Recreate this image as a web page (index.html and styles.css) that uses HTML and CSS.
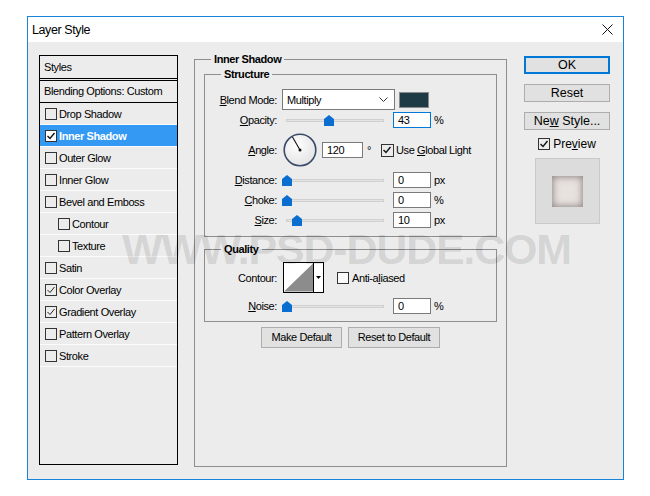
FILE: index.html
```html
<!DOCTYPE html>
<html lang="en">
<head>
    <meta charset="UTF-8">
    <title>Layer Style</title>
    <link rel="stylesheet" href="styles.css">
</head>
<body>
    <div class="dialog">
        <div class="titlebar">
            <span class="title">Layer Style</span>
            <svg class="close" width="11" height="11" viewBox="0 0 11 11"><path d="M0.5 0.5 L10.5 10.5 M10.5 0.5 L0.5 10.5" stroke="#111" stroke-width="1"/></svg>
        </div>

        <div class="content">
            <!-- styles list -->
            <div class="styles-list">
                <div class="list-head">Styles</div>
                <div class="list-blend">Blending Options: Custom</div>
                <div class="list-item"><span class="cb"></span>Drop Shadow</div>
                <div class="list-item selected"><span class="cb"><svg viewBox="0 0 10 10"><polyline points="1.5,5 4,7.5 8.5,2"/></svg></span>Inner Shadow</div>
                <div class="list-item"><span class="cb"></span>Outer Glow</div>
                <div class="list-item"><span class="cb"></span>Inner Glow</div>
                <div class="list-item"><span class="cb"></span>Bevel and Emboss</div>
                <div class="list-item sub"><span class="cb"></span>Contour</div>
                <div class="list-item sub"><span class="cb"></span>Texture</div>
                <div class="list-item"><span class="cb"></span>Satin</div>
                <div class="list-item"><span class="cb thin"><svg viewBox="0 0 10 10"><polyline points="1.5,5 4,7.5 8.5,2"/></svg></span>Color Overlay</div>
                <div class="list-item"><span class="cb thin"><svg viewBox="0 0 10 10"><polyline points="1.5,5 4,7.5 8.5,2"/></svg></span>Gradient Overlay</div>
                <div class="list-item"><span class="cb"></span>Pattern Overlay</div>
                <div class="list-item"><span class="cb"></span>Stroke</div>
            </div>

            <!-- settings -->
            <fieldset class="group outer">
                <legend>Inner Shadow</legend>

                <fieldset class="group structure">
                    <legend>Structure</legend>
                    <div class="row blend-row">
                        <span class="lbl"><u>B</u>lend Mode:</span>
                        <div class="select"><span>Multiply</span><svg width="9" height="5" viewBox="0 0 9 5"><polyline points="0.5,0.5 4.5,4.5 8.5,0.5"/></svg></div>
                        <div class="swatch"></div>
                    </div>
                    <div class="row field-row">
                        <span class="lbl"><u>O</u>pacity:</span>
                        <div class="slider"><div class="track"></div><svg class="thumb" style="left:42px" viewBox="0 0 10 11"><path d="M5 0 L10 4 L10 11 L0 11 L0 4 Z"/></svg></div>
                        <div class="num focused">43</div>
                        <span class="unit">%</span>
                    </div>
                    <div class="row angle-row">
                        <span class="lbl"><u>A</u>ngle:</span>
                        <svg class="dial" width="34" height="34" viewBox="0 0 34 34">
                            <defs>
                                <radialGradient id="dialfill" cx="0.4" cy="0.35" r="0.7">
                                    <stop offset="0" stop-color="#ffffff"/>
                                    <stop offset="1" stop-color="#e2e2e2"/>
                                </radialGradient>
                            </defs>
                            <circle cx="17" cy="17" r="15.8" fill="url(#dialfill)" stroke="#3a4a6a" stroke-width="1.6"/>
                            <line x1="17" y1="17" x2="9.5" y2="4" stroke="#111" stroke-width="1.1"/>
                            <circle cx="17" cy="17" r="1.5" fill="#111"/>
                        </svg>
                        <div class="num angle-num">120</div>
                        <span class="deg">°</span>
                        <span class="cb big"><svg viewBox="0 0 10 10"><polyline points="1.5,5 4,7.5 8.5,2"/></svg></span>
                        <span class="cb-text">Use <u>G</u>lobal Light</span>
                    </div>
                    <div class="row field-row">
                        <span class="lbl"><u>D</u>istance:</span>
                        <div class="slider"><div class="track"></div><svg class="thumb" style="left:0px" viewBox="0 0 10 11"><path d="M5 0 L10 4 L10 11 L0 11 L0 4 Z"/></svg></div>
                        <div class="num">0</div>
                        <span class="unit">px</span>
                    </div>
                    <div class="row field-row">
                        <span class="lbl"><u>C</u>hoke:</span>
                        <div class="slider"><div class="track"></div><svg class="thumb" style="left:0px" viewBox="0 0 10 11"><path d="M5 0 L10 4 L10 11 L0 11 L0 4 Z"/></svg></div>
                        <div class="num">0</div>
                        <span class="unit">%</span>
                    </div>
                    <div class="row field-row">
                        <span class="lbl"><u>S</u>ize:</span>
                        <div class="slider"><div class="track"></div><svg class="thumb" style="left:10px" viewBox="0 0 10 11"><path d="M5 0 L10 4 L10 11 L0 11 L0 4 Z"/></svg></div>
                        <div class="num">10</div>
                        <span class="unit">px</span>
                    </div>
                </fieldset>

                <fieldset class="group quality">
                    <legend>Quality</legend>
                    <div class="row contour-row">
                        <span class="lbl">Contour:</span>
                        <div class="contour">
                            <svg class="curve" width="30" height="29" viewBox="0 0 30 29"><polygon points="0,29 30,0 30,29" fill="#8c8c8c"/></svg>
                            <div class="drop"><svg width="5" height="3" viewBox="0 0 5 3"><polygon points="0,0 5,0 2.5,3" fill="#000"/></svg></div>
                        </div>
                        <span class="cb big anti"></span>
                        <span class="cb-text">Anti-a<u>l</u>iased</span>
                    </div>
                    <div class="row field-row noise-row">
                        <span class="lbl"><u>N</u>oise:</span>
                        <div class="slider"><div class="track"></div><svg class="thumb" style="left:0px" viewBox="0 0 10 11"><path d="M5 0 L10 4 L10 11 L0 11 L0 4 Z"/></svg></div>
                        <div class="num">0</div>
                        <span class="unit">%</span>
                    </div>
                </fieldset>

                <div class="defaults">
                    <div class="small-btn make">Make Default</div>
                    <div class="small-btn reset">Reset to Default</div>
                </div>
            </fieldset>

            <!-- buttons -->
            <div class="actions">
                <div class="btn default">OK</div>
                <div class="btn">Reset</div>
                <div class="btn"><span>Ne<u>w</u> Style...</span></div>
                <div class="preview-check">
                    <span class="cb"><svg viewBox="0 0 10 10"><polyline points="1.5,5 4,7.5 8.5,2"/></svg></span>
                    <span>Pre<u>v</u>iew</span>
                </div>
                <div class="preview-box"><div class="preview-swatch"></div></div>
            </div>
        </div>

        <div class="watermark">WWW.PSD-DUDE.COM</div>
    </div>
</body>
</html>
```

FILE: styles.css
```css
* {
    box-sizing: border-box;
}

body {
    margin: 0;
    background: #fff;
    font-family: "Liberation Sans", Arial, sans-serif;
    font-size: 11px;
    letter-spacing: -0.4px;
    color: #000;
}

u {
    text-decoration: underline;
}

.dialog {
    position: relative;
    width: 597px;
    height: 464px;
    margin: 16px 0 0 27px;
    border: 1px solid #1883d7;
    background: #ececec;
}

.titlebar {
    height: 25px;
    background: #fff;
    display: flex;
    align-items: center;
    justify-content: space-between;
    padding: 0 10px 0 4px;
}

.title {
    font-size: 12.5px;
    letter-spacing: -0.4px;
}

.content {
    display: flex;
    align-items: flex-start;
    padding-left: 11px;
}

/* left list */
.styles-list {
    margin-top: 13px;
    width: 139px;
    height: 410px;
    border: 1px solid #000;
}

.list-head {
    height: 23px;
    line-height: 22px;
    padding-left: 4px;
    border-bottom: 1px solid #000;
}

.list-blend {
    margin-top: 1px;
    height: 23px;
    line-height: 21px;
    padding-left: 4px;
    border-top: 1px solid #000;
    border-bottom: 1px solid #000;
}

.list-item {
    height: 22px;
    display: flex;
    align-items: center;
    padding-left: 5px;
    border-bottom: 1px solid #fbfbfb;
}

.list-item.sub {
    padding-left: 18px;
}

.list-item.selected {
    background: #3399f3;
    color: #fff;
    font-weight: bold;
}

.cb {
    display: inline-flex;
    width: 12px;
    height: 12px;
    border: 1px solid #333;
    margin-right: 2px;
    flex-shrink: 0;
}

.cb svg {
    width: 10px;
    height: 10px;
}

.cb polyline {
    fill: none;
    stroke: #111;
    stroke-width: 1.4;
}

.cb.thin polyline {
    stroke-width: 0.9;
}

.selected .cb {
    background: #fff;
}

/* fieldsets */
.group {
    margin: 0;
    padding: 0;
    border: 1px solid #8e8e8e;
    min-width: 0;
}

.group legend {
    padding: 0 3px;
    line-height: 13px;
    font-weight: bold;
}

.outer {
    margin: 11px 0 0 16px;
    width: 313px;
    height: 414px;
    padding: 0 9px;
}

.outer > legend {
    margin-left: 7px;
}

.structure {
    margin-top: 2px;
    padding-bottom: 8px;
}

.structure > legend,
.quality > legend {
    margin-left: 16px;
}

.quality {
    margin-top: 6px;
    padding-bottom: 7px;
}

.row {
    display: flex;
    align-items: center;
}

.lbl {
    width: 72px;
    text-align: right;
    margin-right: 5px;
    flex-shrink: 0;
}

.blend-row {
    margin-top: 8px;
    height: 21px;
}

.select {
    width: 113px;
    height: 21px;
    background: #fff;
    border: 1px solid #7a7a7a;
    display: flex;
    align-items: center;
    justify-content: space-between;
    padding: 0 6px 0 4px;
}

.select polyline {
    fill: none;
    stroke: #333;
    stroke-width: 1;
}

.swatch {
    margin-left: 4px;
    width: 30px;
    height: 16px;
    background: #1d3a45;
    border: 1px solid #8a8a8a;
}

.field-row {
    margin-top: 4px;
    height: 16px;
}

.blend-row + .field-row {
    margin-top: 2px;
}

.slider {
    position: relative;
    width: 106px;
    height: 16px;
    margin-right: 5px;
}

.track {
    position: absolute;
    left: 4px;
    right: 4px;
    top: 7px;
    height: 3px;
    background: #e4e4e4;
    border: 1px solid #d0d0d0;
}

.thumb {
    position: absolute;
    top: 3px;
    width: 10px;
    height: 11px;
    fill: #0a6ed1;
}

.num {
    width: 38px;
    height: 16px;
    line-height: 14px;
    padding-left: 4px;
    background: #fff;
    border: 1px solid #7a7a7a;
}

.num.focused {
    border-color: #0078d7;
}

.unit {
    margin-left: 3px;
}

.angle-row {
    margin-top: 4px;
    height: 36px;
}

.dial {
    margin-left: 1px;
}

.angle-num {
    width: 41px;
    margin-left: 5px;
}

.deg {
    margin-left: 4px;
    margin-right: 10px;
}

.cb.big {
    width: 13px;
    height: 13px;
    margin-right: 2px;
}

.contour-row {
    margin-top: 6px;
    height: 31px;
}

.noise-row {
    margin-top: 5px;
}

.contour {
    display: flex;
    margin-left: 1px;
    height: 31px;
    border: 1px solid #000;
}

.curve {
    background: #fff;
    border-right: 1px solid #000;
    width: 30px;
    height: 29px;
}

.drop {
    width: 9px;
    display: flex;
    align-items: center;
    justify-content: center;
    background: #fff;
}

.cb.anti {
    margin-left: 13px;
    margin-right: 3px;
    width: 12px;
    height: 12px;
    background: #fafafa;
}

.defaults {
    display: flex;
    justify-content: center;
    gap: 6px;
    margin-top: 5px;
}

.small-btn {
    height: 21px;
    line-height: 19px;
    text-align: center;
    background: #e1e1e1;
    border: 1px solid #adadad;
}

.small-btn.make {
    width: 81px;
}

.small-btn.reset {
    width: 92px;
}

/* right column */
.actions {
    margin: 14px 0 0 17px;
    width: 86px;
    display: flex;
    flex-direction: column;
    gap: 10px;
}

.btn {
    height: 18px;
    display: flex;
    align-items: center;
    justify-content: center;
    background: #e1e1e1;
    border: 1px solid #adadad;
    font-size: 12.5px;
    letter-spacing: 0;
}

.btn.default {
    border: 2px solid #0078d7;
}

.preview-check {
    margin-top: -3px;
    height: 14px;
    display: flex;
    align-items: center;
    justify-content: center;
    font-size: 12px;
    letter-spacing: 0;
}

.preview-check .cb {
    margin-right: 3px;
}

.preview-box {
    margin: -3px auto 0;
    width: 65px;
    height: 66px;
    background: #dcdcdc;
    border: 1px solid #c9c9c9;
    display: flex;
    align-items: center;
    justify-content: center;
}

.preview-swatch {
    width: 31px;
    height: 31px;
    background: #e8e2df;
    box-shadow: inset 0 0 7px 1px rgba(70, 60, 58, 0.55);
}

.watermark {
    position: absolute;
    left: 94px;
    top: 216px;
    font-size: 43px;
    line-height: 32px;
    font-weight: bold;
    letter-spacing: -1.2px;
    color: rgba(0, 0, 0, 0.11);
    white-space: nowrap;
    pointer-events: none;
}
```
